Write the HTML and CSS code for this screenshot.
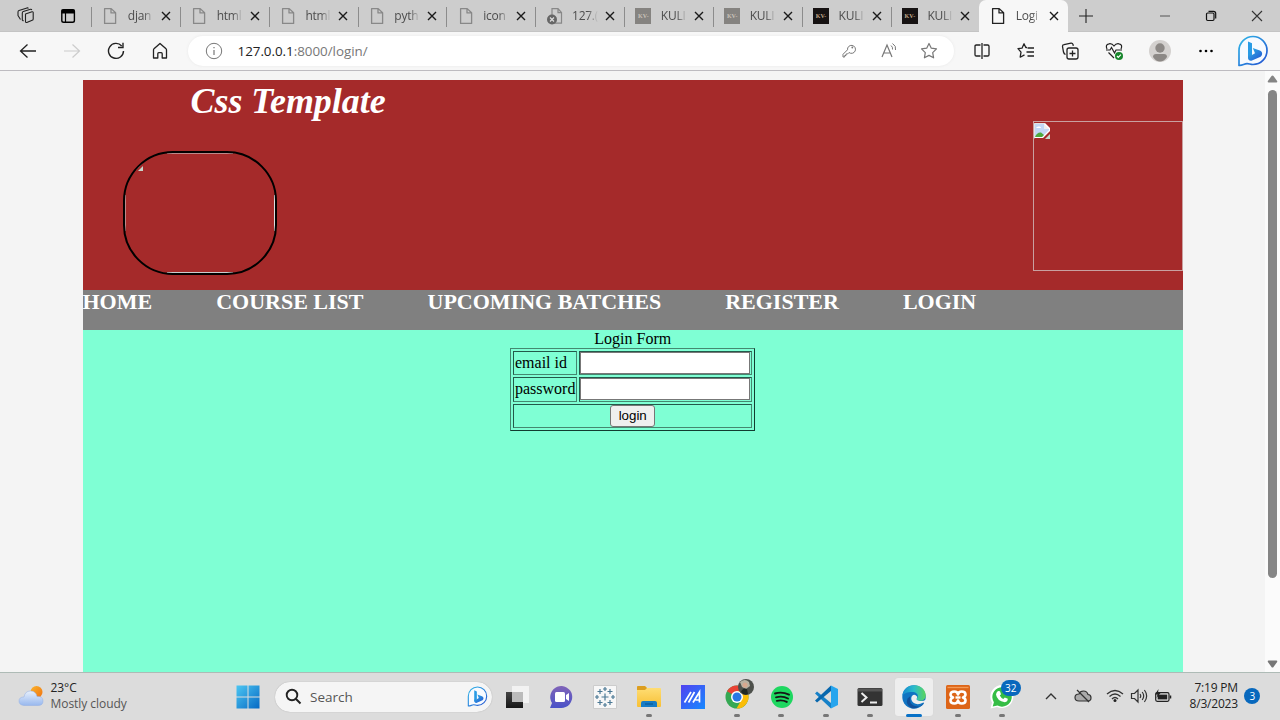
FILE: index.html
```html
<!DOCTYPE html>
<html lang="en">
<head>
<meta charset="utf-8">
<title>Login</title>
<link rel="stylesheet" href="styles.css">
</head>
<body>
<svg class="defs" width="0" height="0">
  <defs>
    <linearGradient id="bing" x1="0" y1="0" x2="1" y2="1"><stop offset="0" stop-color="#2fb8e8"/><stop offset="1" stop-color="#2350d0"/></linearGradient>
    <linearGradient id="win" x1="0" y1="0" x2="1" y2="1"><stop offset="0" stop-color="#4cc6f2"/><stop offset="1" stop-color="#0669c4"/></linearGradient>
    <linearGradient id="cloud" x1="0" y1="0" x2="0" y2="1"><stop offset="0" stop-color="#e8f0fc"/><stop offset="1" stop-color="#98b8ee"/></linearGradient>
    <linearGradient id="sun" x1="0" y1="0" x2="1" y2="1"><stop offset="0" stop-color="#fbb52c"/><stop offset="1" stop-color="#ef7112"/></linearGradient>
    <linearGradient id="chat" x1="0" y1="0" x2="0" y2="1"><stop offset="0" stop-color="#8064b8"/><stop offset="1" stop-color="#4a52c8"/></linearGradient>
    <linearGradient id="folder" x1="0" y1="0" x2="0" y2="1"><stop offset="0" stop-color="#ffe07a"/><stop offset="1" stop-color="#f8c035"/></linearGradient>
    <linearGradient id="asus" x1="0" y1="0" x2="1" y2="1"><stop offset="0" stop-color="#5242f0"/><stop offset="1" stop-color="#1689ff"/></linearGradient>
    <linearGradient id="edgeTop" x1="0" y1="0" x2="1" y2="0"><stop offset="0" stop-color="#1689d0"/><stop offset=".5" stop-color="#2bbccb"/><stop offset="1" stop-color="#5bd55b"/></linearGradient>
    <linearGradient id="dark" x1="0" y1="0" x2="0" y2="1"><stop offset="0" stop-color="#444"/><stop offset="1" stop-color="#161616"/></linearGradient>
    <symbol id="page" viewBox="0 0 16 18"><path d="M2.600 1.600h6.600l4.400 4.200v10.600h-11zM9 1.600v4.300h4.500" fill="none" stroke="currentColor" stroke-width="1.300" stroke-linejoin="round"/></symbol>
    <symbol id="x" viewBox="0 0 10 10"><path d="M1 1l8 8M9 1L1 9" fill="none" stroke="#1a1a1a" stroke-width="1.400"/></symbol>
    <symbol id="bingmark" viewBox="0 0 32 32"><path d="M2 30.300V15.500A14 14 0 1 1 16 29.500C13.500 29.600 12 28.500 10 28.600C7 28.800 5 30.800 2 30.300Z" fill="#f7faff" stroke="url(#bing)" stroke-width="1.700"/><path d="M11 6.500l4 1.700v11.800l-4 3.500z" fill="#289be5"/><path d="M11 20.500l4-.5 3-1.700-2.200-5.300 7 2.600c3 1.200 3 4.600.8 6.100L15 25.500c-2 .9-4-.6-4-2.500z" fill="url(#bing)"/></symbol>
    <symbol id="broken" viewBox="0 0 16 16"><path d="M0 0h11l5 5v3L9 15H0z" fill="#fff"/><path d="M1 1h9v5h5v1l-7 7H1z" fill="#c2d7f5"/><path d="M10 1v5h5z" fill="#eee"/><path d="M2 5q1-2 3-1.500Q7 3 7 5z" fill="#fff"/><path d="M1 14q2-5 6-4.500l3 2.500-2 2z" fill="#4daa3f"/><path d="M16 11v5h-5z" fill="#c9d6cb"/><path d="M0 16V0h11" fill="none" stroke="#bbb" stroke-width=".8"/></symbol>
  </defs>
</svg>

<div class="tabs">
  <div class="tab-tools">
    <svg width="18" height="17" viewBox="0 0 18 17" fill="none" stroke="#222" stroke-width="1.100" stroke-linejoin="round"><path d="M8.500 7l6.500-2.200q1.200-.3 1.200.8v6.400q0 1-1 1.300L9.800 15.500q-1.300.3-1.300-1z"/><path d="M6.500 14l-1.200-1V6q0-1 1-1.400L13.500 2.300q1-.3 1.300.7"/><path d="M3.500 12.500L1 8.500V5q0-1 1-1.400L10 .900q1-.3 1.400.6"/></svg>
    <svg width="16" height="16" viewBox="0 0 16 16"><rect x="1.800" y="1.800" width="12.600" height="12.400" rx="1.800" fill="none" stroke="#000" stroke-width="1.400"/><path d="M1.500 1.500h13v4h-13z"/><path d="M5.500 5v9" stroke="#000" stroke-width="1.200"/></svg>
  </div>
  <div class="tab"><svg class="fav"><use href="#page"/></svg><span>djan</span><svg class="close"><use href="#x"/></svg></div>
  <div class="tab"><svg class="fav"><use href="#page"/></svg><span>html</span><svg class="close"><use href="#x"/></svg></div>
  <div class="tab"><svg class="fav"><use href="#page"/></svg><span>html</span><svg class="close"><use href="#x"/></svg></div>
  <div class="tab"><svg class="fav"><use href="#page"/></svg><span>pyth</span><svg class="close"><use href="#x"/></svg></div>
  <div class="tab"><svg class="fav"><use href="#page"/></svg><span>icon</span><svg class="close"><use href="#x"/></svg></div>
  <div class="tab"><svg class="fav" viewBox="0 0 16 18"><path d="M5 1.600h6l3.500 4v10.600H5zM11 1.600v4h3.500" fill="none" stroke="#888" stroke-width="1.200"/><circle cx="5" cy="12.500" r="5" fill="#666"/><path d="M3 10.500l4 4m0-4l-4 4" stroke="#ddd" stroke-width="1.200"/></svg><span>127.(</span><svg class="close"><use href="#x"/></svg></div>
  <div class="tab"><b class="kv faded">KV-</b><span>KULI</span><svg class="close"><use href="#x"/></svg></div>
  <div class="tab"><b class="kv faded">KV-</b><span>KULI</span><svg class="close"><use href="#x"/></svg></div>
  <div class="tab"><b class="kv">KV-</b><span>KULI</span><svg class="close"><use href="#x"/></svg></div>
  <div class="tab"><b class="kv">KV-</b><span>KULI</span><svg class="close"><use href="#x"/></svg></div>
  <div class="tab active"><svg class="fav"><use href="#page"/></svg><span>Logi</span><svg class="close"><use href="#x"/></svg></div>
  <svg class="newtab" width="14" height="14" viewBox="0 0 14 14"><path d="M7 0v14M0 7h14" stroke="#222" stroke-width="1.100"/></svg>
  <div class="window-buttons">
    <svg width="12" height="12" viewBox="0 0 12 12"><path d="M1 6h10" stroke="#555"/></svg>
    <svg width="12" height="12" viewBox="0 0 12 12" fill="none" stroke="#111" stroke-width="1.200"><rect x="1.500" y="3" width="7.500" height="7.500" rx="1.200"/><path d="M3.500 1.300h5q2.200 0 2.200 2.200v5"/></svg>
    <svg width="12" height="12" viewBox="0 0 12 12"><path d="M1 1l10 10M11 1L1 11" stroke="#333" stroke-width="1.100"/></svg>
  </div>
</div>

<div class="toolbar">
  <div class="slot"><svg width="18" height="16" viewBox="0 0 18 16"><path d="M17 8H1.500M8.500 1.500L1.500 8l7 6.500" fill="none" stroke="#222" stroke-width="1.300"/></svg></div>
  <div class="slot"><svg width="18" height="16" viewBox="0 0 18 16"><path d="M1 8h15.500M9.500 1.500l7 6.500-7 6.500" fill="none" stroke="#ccc" stroke-width="1.200"/></svg></div>
  <div class="slot"><svg width="18" height="18" viewBox="0 0 18 18"><path d="M16.500 9A7.500 7.500 0 1 1 14.700 4M16 .800v4.700h-5" fill="none" stroke="#222" stroke-width="1.400"/></svg></div>
  <div class="slot"><svg width="18" height="18" viewBox="0 0 18 18"><path d="M2.500 8q0-.8.5-1.200L9 1.500l6 5.300q.5.400.5 1.200v8h-4.300v-4.300q0-1-1-1H7.800q-1 0-1 1V16H2.500z" fill="none" stroke="#222" stroke-width="1.300" stroke-linejoin="round"/></svg></div>
  <div class="address">
    <svg class="info" width="18" height="18" viewBox="0 0 18 18"><circle cx="9" cy="9" r="7.700" fill="none" stroke="#777"/><path d="M9 8v5M9 5v1.300" stroke="#777" stroke-width="1.200"/></svg>
    <span class="url"><em>127.0.0.1</em>:8000/login/</span>
    <div class="slot"><svg width="16" height="16" viewBox="0 0 16 16"><path d="M8 9.500L6.500 11H5v1.500H3.700V14H2v-2.700l4.500-4.500A4 4 0 1 1 8 9.500z" fill="none" stroke="#777" stroke-linejoin="round"/><circle cx="11.300" cy="4.500" r=".9" fill="#777"/></svg></div>
    <div class="slot"><svg width="18" height="18" viewBox="0 0 18 18" fill="none" stroke="#777"><path d="M2 15L7 3l5 12M3.700 11h6.600" stroke-width="1.200"/><path d="M11 3.500q2 1.500 1.500 4M12.500 1.500q4 2.500 3 6.500"/></svg></div>
    <div class="slot"><svg width="18" height="18" viewBox="0 0 18 18"><path d="M9 1.500l2.300 4.700 5.200.7-3.800 3.700.9 5.200L9 13.400l-4.600 2.400.9-5.200L1.500 6.900l5.200-.7z" fill="none" stroke="#777" stroke-width="1.200" stroke-linejoin="round"/></svg></div>
  </div>
  <div class="slot"><svg width="18" height="18" viewBox="0 0 18 18" fill="none" stroke="#222" stroke-width="1.300"><path d="M7.500 3H3.300Q2 3 2 4.300v8.400Q2 14 3.300 14h4.200M10.500 3h4.200Q16 3 16 4.300v8.400q0 1.300-1.300 1.300h-4.200M9 1v16"/></svg></div>
  <div class="slot"><svg width="18" height="18" viewBox="0 0 18 18" fill="none" stroke="#222" stroke-width="1.300"><path d="M10 5.500H8.800L7 1.800 5 6.200l-4 .5 3 3.500-.8 5 4.300-2.300M10.500 6H17M9.500 10H17M10.500 14H17" stroke-linejoin="round"/></svg></div>
  <div class="slot"><svg width="18" height="18" viewBox="0 0 18 18" fill="none" stroke="#222" stroke-width="1.300"><rect x="6" y="6" width="11" height="11" rx="2"/><path d="M11.500 8.500v6M8.500 11.500h6M4.500 12.500Q3 12 2.500 10L1.500 4.500Q1.300 3 3 2.700l7-1.500q1.500-.2 2 1.200l.3 1.500"/></svg></div>
  <div class="slot"><svg width="18" height="18" viewBox="0 0 18 18" fill="none" stroke="#222" stroke-width="1.200"><path d="M2 7Q0 2.500 4 1.800 7 1.200 9 4q2-2.800 5-2.200 4 .7 2 5.200M1 8h4l1.500-2.500L9.500 11l1.500-3h6M3.500 10.500L9 16"/><circle cx="14" cy="14" r="4" fill="#17852b" stroke="none"/><path d="M12 14l1.300 1.300 2.600-2.600" stroke="#fff"/></svg></div>
  <div class="slot profile"><svg width="22" height="22" viewBox="0 0 22 22"><circle cx="11" cy="11" r="11" fill="#d4d1cf"/><circle cx="11" cy="8" r="4.700" fill="#8c8885"/><path d="M4 17q0-3 3-3h8q3 0 3 3-3 4.500-7 4.500T4 17z" fill="#8c8885"/></svg></div>
  <div class="slot"><svg width="16" height="4" viewBox="0 0 16 4"><circle cx="2.500" cy="2" r="1.300"/><circle cx="8" cy="2" r="1.300"/><circle cx="13.500" cy="2" r="1.300"/></svg></div>
  <div class="slot bing"><svg width="32" height="32"><use href="#bingmark"/></svg></div>
</div>

<div class="viewport">
  <main class="site">
    <header class="banner">
      <h1>Css Template</h1>
      <div class="banner-images">
        <div class="photo"><svg width="16" height="16"><use href="#broken"/></svg></div>
        <div class="side-photo"><svg width="16" height="16"><use href="#broken"/></svg></div>
      </div>
    </header>
    <nav class="menu"><a>HOME</a><a>COURSE LIST</a><a>UPCOMING BATCHES</a><a>REGISTER</a><a>LOGIN</a></nav>
    <section class="content">
      <table class="login">
        <caption>Login Form</caption>
        <tr><td>email id</td><td><input type="text"></td></tr>
        <tr class="middle"><td>password</td><td><input type="password"></td></tr>
        <tr><td colspan="2" class="submit"><button>login</button></td></tr>
      </table>
    </section>
  </main>
  <div class="scrollbar">
    <svg width="11" height="8" viewBox="0 0 11 8"><path d="M5.500 .500q.6 0 1 .6l3.600 5q.6 1.100-.7 1.400H1.600Q.3 7.200.9 6.100l3.600-5q.4-.6 1-.6z" fill="#858585"/></svg>
    <i></i>
    <svg class="down" width="11" height="8" viewBox="0 0 11 8"><path d="M5.500 7.500q-.6 0-1-.6l-3.600-5Q.3.800 1.600.500h7.800q1.300.3.700 1.400l-3.600 5q-.4.600-1 .6z" fill="#777"/></svg>
  </div>
</div>

<div class="taskbar">
  <div class="weather">
    <svg width="26" height="22" viewBox="0 0 26 22"><circle cx="18.500" cy="7" r="6" fill="url(#sun)"/><path d="M6 20.500Q1 20 1 16q0-4 5-4 1-6 6.500-6T19 11.500q6-.5 6 4.500 0 4.500-5 4.500z" fill="url(#cloud)" stroke="#93aee5" stroke-width=".5"/></svg>
    <div><strong>23°C</strong><span>Mostly cloudy</span></div>
  </div>
  <div class="task start"><svg width="24" height="24" viewBox="0 0 24 24"><path d="M.5.500h11v11H.5zM12.500.500h11v11h-11zM.5 12.500h11v11H.5zM12.500 12.500h11v11h-11z" fill="url(#win)"/></svg></div>
  <div class="search"><svg width="17" height="17" viewBox="0 0 17 17" fill="none" stroke="#222" stroke-width="1.900"><circle cx="7" cy="7" r="5.300"/><path d="M11 11l4.500 4.500"/></svg><span>Search</span><svg width="21" height="21"><use href="#bingmark"/></svg></div>
  <div class="task"><svg width="26" height="24" viewBox="0 0 26 24"><path d="M8 1h17v17H8z" fill="#f2f2f2"/><path d="M2 7h17v16H2z" fill="url(#dark)"/><path d="M8 7h11v10H8z" fill="#bbb"/></svg></div>
  <div class="task"><svg width="24" height="24" viewBox="0 0 24 24"><path d="M1 23l2-5A11 11 0 1 1 12 23z" fill="url(#chat)"/><rect x="6" y="7" width="10" height="10" rx="1.500" fill="#fff"/><path d="M17 10l3-2v8l-3-2z" fill="#fff"/></svg></div>
  <div class="task"><svg width="24" height="24" viewBox="0 0 24 24"><path d="M.5.500h23v23H.5z" fill="#f7f7f7" stroke="#ccc"/><path d="M12 8.500v7M8.500 12h7M7 4v5M4.500 6.500h5M17 4v5M14.500 6.500h5M7 15v5M4.500 17.500h5M17 15v5M14.500 17.500h5M12 2v4M10 4h4M12 18v4M10 20h4M2 12h4M4 10v4M18 12h4M20 10v4" stroke="#4b7894" stroke-width="1.200"/></svg></div>
  <div class="task run"><svg width="26" height="24" viewBox="0 0 26 24"><path d="M1 5V2q0-1 1-1h7l2 2h13q1 0 1 1v17q0 1-1 1H2q-1 0-1-1z" fill="url(#folder)"/><path d="M1 2q0-1 1-1h7l2 2-2 2H1z" fill="#dc9e20"/><path d="M5 22v-4q0-2 2-2h12q2 0 2 2v4z" fill="#167bc5"/><path d="M9 19h8" stroke="#0d5f9e" stroke-width="1.500"/></svg></div>
  <div class="task"><svg width="24" height="24" viewBox="0 0 24 24"><path d="M0 0h24v24H0z" fill="url(#asus)"/><path d="M3.500 17.500L10 7M7.500 17.500L13.500 7M12 17.500L18.500 7v10.500M14.500 15H19" fill="none" stroke="#fff" stroke-width="1.700"/></svg></div>
  <div class="task run"><svg width="24" height="24" viewBox="0 0 24 24"><circle cx="12" cy="12" r="11.500" fill="#35a853"/><path d="M12 12L2 6.200A11.500 11.500 0 0 1 22 6.200H12z" fill="#e94336"/><path d="M12 6.300h10A11.500 11.500 0 0 1 11.500 23.500l5-8.800z" fill="#fbbc07"/><circle cx="12" cy="12" r="6" fill="#fff"/><circle cx="12" cy="12" r="4.500" fill="#2878e5"/></svg><svg class="avatar" width="16" height="16" viewBox="0 0 16 16"><circle cx="8" cy="8" r="8" fill="#4d504b"/><path d="M2 3q5-4 9 0l1 4-4 3-4-2z" fill="#b9b2a2"/><circle cx="7" cy="6" r="2.500" fill="#d7a88e"/><path d="M3 13q2-5 6-3l1 5q-4 2-7-2z" fill="#202925"/></svg></div>
  <div class="task run"><svg width="22" height="22" viewBox="0 0 22 22"><circle cx="11" cy="11" r="11" fill="#1ed760"/><path d="M4 7.500q7-2.300 14 1.200M5 11.300q6.500-1.800 12 1.200M5.800 14.800q5.500-1.300 10 1.100" fill="none" stroke="#161616" stroke-width="1.900" stroke-linecap="round"/></svg></div>
  <div class="task run"><svg width="24" height="24" viewBox="0 0 24 24"><path d="M1 8.500l2-2L17 18v5.500z" fill="#1681c8"/><path d="M1 15.500l2 2L17 6V.500z" fill="#0867ad"/><path d="M17 .500L24 4v16l-7 3.500z" fill="#27a5ee"/></svg></div>
  <div class="task run"><svg width="26" height="20" viewBox="0 0 26 20"><rect x=".5" y="1" width="25" height="18" rx="1.500" fill="#333"/><path d="M1 1.500h24v3H1z" fill="#555"/><path d="M4.500 6l5 4.500-5 4.500M13 15.500h7" fill="none" stroke="#eee" stroke-width="2"/></svg></div>
  <div class="task selected"><svg width="24" height="24" viewBox="0 0 24 24"><circle cx="12" cy="12" r="11.700" fill="#1174c2"/><path d="M.4 11C1 4 6 .300 12 .300c7 0 11.700 4.700 11.700 10 0 5-4.500 6.200-7.500 5.200-2.200-.7-1.500-1.800-.7-3.300C17 9 13.500 7 10 7 5.500 7 1.500 8.500.4 11z" fill="url(#edgeTop)"/><path d="M8.500 11q-2.500 10 8 10.500 4-.3 5.500-3.500Q16 24 10 23.300 3 20 5.500 13.500z" fill="#11509a"/><path d="M15 11.500q-2.500-3.200-5.200-.2-1.800 3.700 2 6.700 4 2.500 9.600-.5l2.600 2V14.500q-3.500 2.500-8 1-2.200-.7-1-2.500z" fill="#eee"/></svg></div>
  <div class="task run"><svg width="24" height="24" viewBox="0 0 24 24"><rect width="24" height="24" rx="1.500" fill="#dd6518"/><path d="M1.500 2.500h21" stroke="#f39a55" stroke-width="1.300"/><path d="M8.300 6.500q3.200 0 3.700 3 .5-3 3.700-3 3.800 0 3.800 3 0 2-2.500 3 2.500 1 2.500 3 0 3-3.800 3-3.200 0-3.700-3-.5 3-3.700 3-3.800 0-3.800-3 0-2 2.500-3-2.500-1-2.500-3 0-3 3.800-3z" fill="none" stroke="#fff" stroke-width="2.600" stroke-linejoin="round"/><path d="M9.500 12.500h5" stroke="#fff" stroke-width="2.400"/></svg></div>
  <div class="task run"><svg width="24" height="24" viewBox="0 0 24 24"><path d="M.5 23.500L2 17.500A11.500 11.500 0 1 1 7 22z" fill="#fff"/><path d="M2.700 21.500l1.200-4.300A9.700 9.700 0 1 1 7.500 20.500z" fill="#35bd45"/><path d="M8 6l2 .3 1 3-1.200 1.300q1.200 2.500 3.500 3.400l1.500-1.500 3 1.300q0 3-3 3.500Q7 16 6 9.500 6.300 7 8 6z" fill="#fff"/></svg><b class="count">32</b></div>
  <div class="tray">
    <svg width="12" height="8" viewBox="0 0 12 8"><path d="M1 7l5-5 5 5" fill="none" stroke="#333" stroke-width="1.400"/></svg>
    <svg width="18" height="16" viewBox="0 0 18 16"><path d="M5 13Q1 13 1 9.500T5 6q1-3 4.500-3T14 6.500q3 .2 3 3.300 0 3.200-3 3.200z" fill="#aaa" stroke="#333" stroke-width="1.200"/><path d="M3 2l12 12" stroke="#333" stroke-width="1.300"/></svg>
    <svg width="18" height="14" viewBox="0 0 18 14" fill="none" stroke="#333" stroke-width="1.300"><path d="M1 5q8-7 16 0M3.500 7.500q5.500-5 11 0M6 10q3-3 6 0"/><circle cx="9" cy="11.500" r="1.500" fill="#222" stroke="none"/></svg>
    <svg width="18" height="16" viewBox="0 0 18 16" fill="none" stroke="#333" stroke-width="1.200"><path d="M1.500 5.500h3L8 2v12l-3.500-3.500h-3zM10 6q1.500 2 0 4M12.200 4q3 4 0 8M14.400 2q4.500 6 0 12"/></svg>
    <svg width="18" height="14" viewBox="0 0 18 14"><rect x="1.700" y="3.700" width="13.300" height="8.600" rx="1.500" fill="none" stroke="#222" stroke-width="1.200"/><rect x="3.700" y="5.600" width="9.500" height="4.800" fill="#222"/><path d="M16.500 6.500v3" stroke="#222" stroke-width="1.500"/><path d="M4.500 0L1 5.500h2.500L2.500 9 6.500 4H4z" fill="#222"/></svg>
  </div>
  <div class="clock"><span>7:19 PM</span><span>8/3/2023</span></div>
  <b class="notice">3</b>
</div>
</body>
</html>
```
FILE: styles.css
```css
* { box-sizing: border-box; }
body { margin: 0; width: 1280px; height: 720px; overflow: hidden; display: flex; flex-direction: column; font-family: "Open Sans", "Noto Sans", sans-serif; color: #222; }
svg { display: block; flex: none; }
.defs { position: absolute; }

.tabs { height: 32px; flex: none; display: flex; align-items: center; background: #cdcdcd; border-bottom: 1px solid #c4c4c4; }
.tab-tools { width: 91px; flex: none; display: flex; align-items: center; gap: 25px; padding-left: 17px; }
.tab { position: relative; width: 88.85px; height: 32px; flex: none; display: flex; align-items: center; padding-left: 11.3px; color: #888; }
.tab::before { content: ""; width: 1px; height: 20px; background: #8c8c8c; position: absolute; left: 0; top: 7px; }
.tab.active { background: #f7f7f7; border-radius: 7px 7px 0 0; color: #222; margin-left: -.5px; }
.tab.active::before { display: none; }
.fav { width: 16px; height: 18px; }
.tab span { width: 26px; flex: none; margin-left: 9.5px; white-space: nowrap; font-size: 12px; line-height: 20px; letter-spacing: -.25px; color: #4d4d4d; -webkit-mask-image: linear-gradient(90deg, #000 60%, transparent); mask-image: linear-gradient(90deg, #000 60%, transparent); }
.close { width: 10px; height: 10px; margin-left: 7px; }
.kv { width: 16px; height: 16px; flex: none; background: #171313; color: #c2a98b; font: bold 6px/16px "Liberation Serif", serif; text-align: center; }
.kv.faded { background: #858380; color: #c9c2b9; }
.newtab { margin-left: 11px; }
.window-buttons { display: flex; gap: 34px; margin-left: auto; padding-right: 17px; }

.toolbar { height: 39px; flex: none; display: flex; align-items: center; background: #f7f7f7; padding-left: 6px; border-bottom: 1px solid #bdbbc0; }
.slot { width: 44px; flex: none; display: flex; justify-content: center; }
.address { width: 766px; height: 30px; flex: none; margin: 0 6px; display: flex; align-items: center; background: #fff; border-radius: 15px; padding: 0 5px 0 17px; box-shadow: 0 0 3px #e8e8e8; }
.address .slot { width: 40px; }
.url { flex: 1; margin-left: 14.5px; font-size: 13.4px; letter-spacing: -.03px; color: #777; }
.url em { font-style: normal; color: #222; }
.slot.profile { width: 48px; }
.slot.bing { width: 49px; }

.viewport { height: 601px; flex: none; display: flex; background: #f4f4f4; padding-left: 83px; }
.site { width: 1100px; margin-top: 8.5px; display: flex; flex-direction: column; font-family: "Liberation Serif", serif; color: #000; }
.banner { height: 210.5px; background: #a52a2a; }
.banner h1 { margin: 0; padding-left: 107.5px; height: 41.5px; font-size: 35.9px; line-height: 42px; font-style: italic; color: #fff; }
.banner-images { display: flex; justify-content: space-between; }
.photo { width: 154px; height: 124px; margin: 30px 0 0 40px; border: 2px solid #000; border-radius: 50px; overflow: hidden; padding: 1px; background: linear-gradient(#bd8888, #bd8888) 50% 0/66px 1px no-repeat, linear-gradient(#ccc, #ccc) 50% 100%/66px 1px no-repeat, linear-gradient(#ddd, #ddd) 100% 50%/1px 36px no-repeat, linear-gradient(#bd8888, #bd8888) 0 50%/1px 36px no-repeat; }
.photo svg { margin: 1px; }
.side-photo { width: 150px; height: 150px; border: 1px solid #c9a0a0; padding: 1px 0; }
.menu { height: 39.5px; background: #808080; display: flex; gap: 64px; color: #fff; font-size: 22px; font-weight: bold; line-height: 24px; }
.menu a:first-child { margin-left: -.5px; }
.content { flex: 1; background: #7fffd4; }
.login { width: 245px; margin: 0 0 0 427px; border: 1px solid; border-color: #448870 #123c30 #123c30 #448870; border-spacing: 2px; font-size: 16px; }
.login caption { line-height: 18px; }
.login tr { height: 24px; }
.login tr.middle { height: 25px; }
.login td { padding: 0 1px; border: 1px solid; border-color: #23594a #448870 #448870 #23594a; line-height: 18px; }
.login td:first-child { width: 64px; }
.login input { display: block; width: 170px; height: 22px; margin: 0 0 0 -1px; padding: 0; border: 1px solid #777; background: #fff; }
.login .submit { text-align: center; }
.login button { display: block; width: 45px; height: 22px; margin: 0 auto; padding: 0; border: 1px solid #767676; border-radius: 3px; background: #efefef; color: #000; font: 13.333px "Liberation Sans", sans-serif; }
.scrollbar { width: 15px; margin-left: auto; padding: 4px 0; background: #fbfbfb; display: flex; flex-direction: column; align-items: center; }
.scrollbar i { width: 9px; height: 488px; margin-top: 7px; border-radius: 5px; background: #858585; }
.scrollbar .down { margin-top: auto; }

.taskbar { height: 48px; flex: none; display: flex; align-items: center; background: #dcdcdc; border-top: 1px solid #aebbb6; }
.weather { width: 226px; flex: none; display: flex; align-items: center; gap: 6.5px; padding-left: 18px; padding-bottom: 1px; font-size: 12px; line-height: 16px; letter-spacing: -.05px; }
.weather strong, .weather span { display: block; font-weight: 400; }
.weather span { color: #555; }
.task { position: relative; width: 44.1px; height: 38px; flex: none; display: flex; align-items: center; justify-content: center; }
.task.run::after { content: ""; position: absolute; left: 19px; bottom: -1px; width: 6px; height: 3px; border-radius: 2px; background: #777; }
.search { width: 217px; height: 30px; flex: none; margin: 0 2.8px 0 5px; border-radius: 15px; background: #f5f5f5; box-shadow: 0 0 1px #999; display: flex; align-items: center; padding: 0 4px 0 10px; font-size: 13.5px; color: #555; }
.search span { flex: 1; margin-left: 8px; }
.selected { width: 38px; margin: 0 3px; background: #eee; border-radius: 3px; box-shadow: 0 0 1px #ccc; }
.selected::after { content: ""; position: absolute; left: 11px; bottom: -1px; width: 16px; height: 3px; border-radius: 2px; background: #0871c7; }
.avatar { position: absolute; right: 5px; top: 1px; }
.count { position: absolute; left: 21px; top: 2px; width: 20px; height: 16px; border-radius: 8px; background: #0868bd; color: #fff; font-size: 10px; font-weight: 400; line-height: 16px; text-align: center; }
.tray { flex: none; display: flex; align-items: center; margin-left: 21px; gap: 6px; padding-bottom: 1px; }
.tray svg:first-child { margin-right: 11px; }
.tray svg:nth-child(2) { margin-right: 8px; }
.clock { width: 66px; flex: none; display: flex; flex-direction: column; text-align: right; font-size: 12px; line-height: 16px; padding-bottom: 1px; letter-spacing: -.2px; }
.notice { width: 16px; height: 16px; flex: none; margin: 0 0 1px 6.500px; border-radius: 50%; background: #0868bd; color: #fff; font-size: 10px; font-weight: 400; line-height: 16px; text-align: center; }
```
